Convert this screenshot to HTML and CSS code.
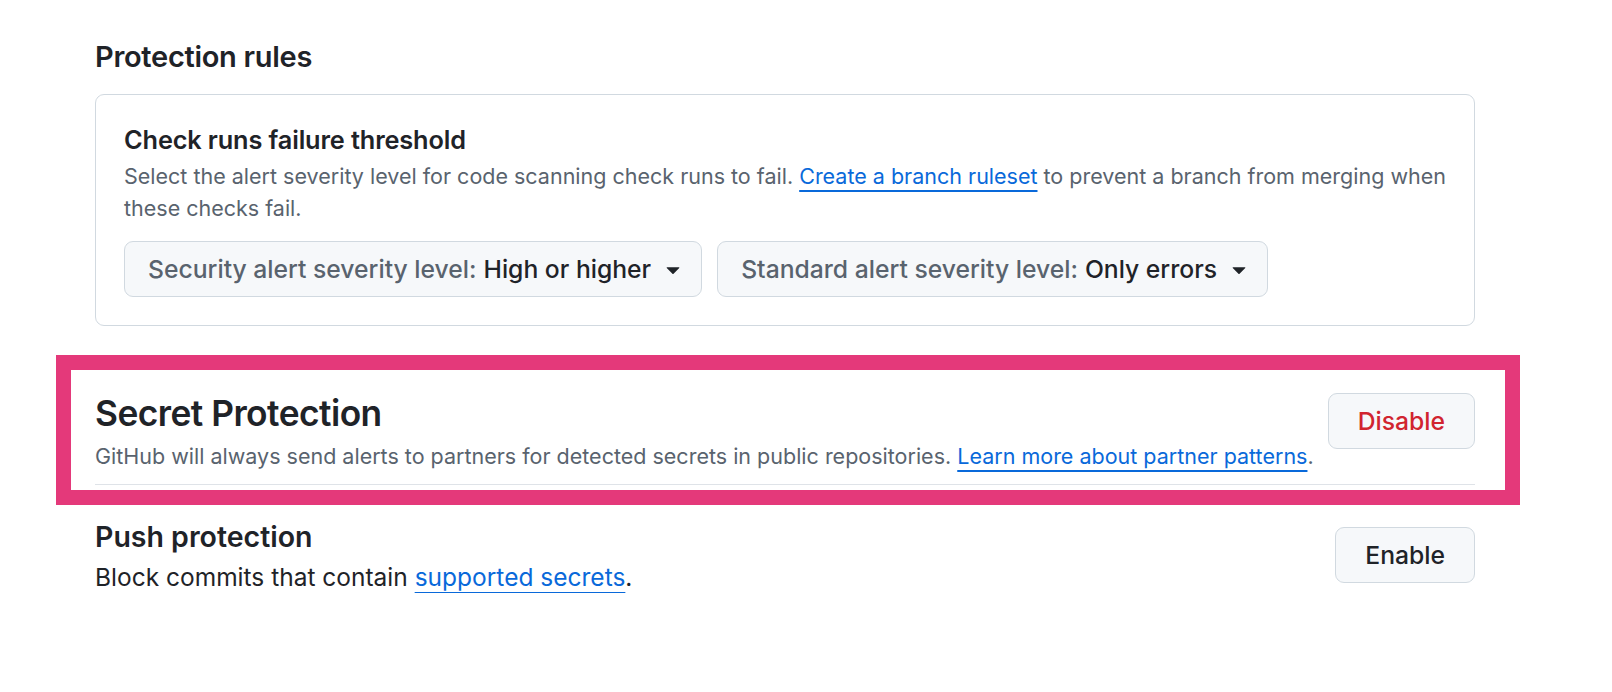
FILE: index.html
```html
<!DOCTYPE html>
<html lang="en">
<head>
<meta charset="utf-8">
<title>Code security settings</title>
<link rel="stylesheet" href="styles.css">
</head>
<body>
<main class="page">
  <h3 class="section-title">Protection rules</h3>

  <div class="card">
    <h4 class="card-title">Check runs failure threshold</h4>
    <p class="card-desc">Select the alert severity level for code scanning check runs to fail. <a href="#" class="link">Create a branch ruleset</a> to prevent a branch from merging when these checks fail.</p>
    <div class="dropdowns">
      <button class="dropdown" type="button">
        <span class="dropdown-label">Security alert severity level:</span>
        <span class="dropdown-value">High or higher</span>
        <svg class="caret" viewBox="0 0 16 16" aria-hidden="true"><path d="m4.427 7.427 3.396 3.396a.25.25 0 0 0 .354 0l3.396-3.396A.25.25 0 0 0 11.396 7H4.604a.25.25 0 0 0-.177.427Z"/></svg>
      </button>
      <button class="dropdown" type="button">
        <span class="dropdown-label">Standard alert severity level:</span>
        <span class="dropdown-value">Only errors</span>
        <svg class="caret" viewBox="0 0 16 16" aria-hidden="true"><path d="m4.427 7.427 3.396 3.396a.25.25 0 0 0 .354 0l3.396-3.396A.25.25 0 0 0 11.396 7H4.604a.25.25 0 0 0-.177.427Z"/></svg>
      </button>
    </div>
  </div>

  <section class="subhead">
    <div class="subhead-text">
      <h2 class="subhead-title">Secret Protection</h2>
      <p class="subhead-desc">GitHub will always send alerts to partners for detected secrets in public repositories. <a href="#" class="link">Learn more about partner patterns</a>.</p>
    </div>
    <button class="btn btn-danger" type="button">Disable</button>
    <div class="highlight" aria-hidden="true"></div>
  </section>

  <div class="setting-row">
    <div class="setting-text">
      <h4 class="setting-title">Push protection</h4>
      <p class="setting-desc">Block commits that contain <a href="#" class="link">supported secrets</a>.</p>
    </div>
    <button class="btn" type="button">Enable</button>
  </div>
</main>
</body>
</html>
```

FILE: styles.css
```css
* { box-sizing: border-box; }

html, body {
  margin: 0;
  padding: 0;
  background: #ffffff;
}

body {
  font-family: Inter, "Noto Sans", "Liberation Sans", sans-serif;
  color: #1f2328;
  font-size: 21.5px;
}

.page {
  width: 1475px;
  padding: 36px 0 0 95px;
}

h2, h3, h4, p { margin: 0; }

.section-title {
  font-size: 29px;
  font-weight: 600;
  line-height: 42px;
  letter-spacing: -0.01em;
}

.card {
  margin-top: 16px;
  border: 1px solid #d1d9e0;
  border-radius: 9px;
  padding: 28px;
}

.card-title {
  font-size: 25.3px;
  font-weight: 600;
  line-height: 34px;
  letter-spacing: -0.005em;
}

.card-desc {
  margin-top: 3px;
  color: #59636e;
  font-size: 21.5px;
  line-height: 32px;
}

.link {
  color: #0969da;
  text-decoration: underline;
  text-decoration-thickness: 2px;
  text-underline-offset: 6px;
}

.dropdowns {
  margin-top: 17px;
  display: flex;
  gap: 15px;
}

.dropdown {
  display: flex;
  align-items: center;
  height: 56px;
  padding: 0 14px 0 23px;
  background: #f6f8fa;
  border: 1px solid #d1d9e0;
  border-radius: 9px;
  font-family: inherit;
  font-size: 24.7px;
  font-weight: 500;
  color: #1f2328;
}

.dropdown-label {
  color: #59636e;
  margin-right: 7px;
}

.caret {
  width: 28px;
  height: 28px;
  margin-left: 8px;
  fill: #1f2328;
}

.subhead {
  position: relative;
  margin-top: 65px;
  display: flex;
  justify-content: space-between;
  align-items: flex-start;
  padding-bottom: 12px;
  border-bottom: 1px solid #dfe3e8;
}

.subhead-text { padding-top: 2px; }

.subhead-title {
  font-size: 35.3px;
  font-weight: 600;
  line-height: 42px;
  letter-spacing: -0.015em;
}

.subhead-desc {
  margin-top: 5px;
  color: #59636e;
  font-size: 21.5px;
  line-height: 32px;
}

.btn {
  flex: none;
  height: 56px;
  padding: 0 29px;
  background: #f6f8fa;
  border: 1px solid #d1d9e0;
  border-radius: 9px;
  font-family: inherit;
  font-size: 24.7px;
  font-weight: 500;
  color: #1f2328;
}

.subhead .btn { margin-top: 2px; }

.btn-danger { color: #d1242f; }

.highlight {
  position: absolute;
  left: -39px;
  right: -45px;
  top: -36px;
  bottom: -21px;
  border: 15px solid #e4397a;
  pointer-events: none;
}

.setting-row {
  margin-top: 31px;
  display: flex;
  justify-content: space-between;
  align-items: center;
}

.setting-title {
  font-size: 28.5px;
  font-weight: 600;
  line-height: 42px;
}

.setting-desc {
  margin-top: 3px;
  font-size: 24.5px;
  line-height: 32px;
  color: #1f2328;
}
```
